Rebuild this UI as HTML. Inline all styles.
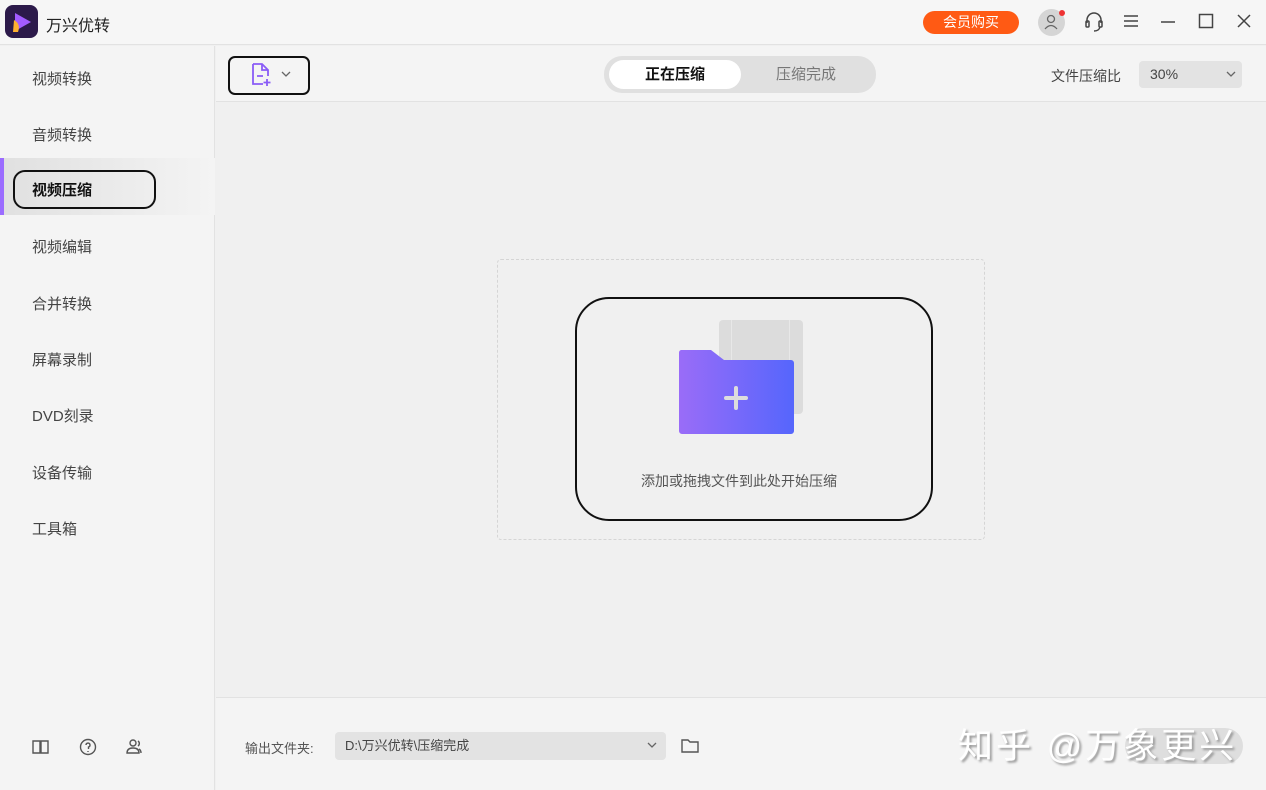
<!DOCTYPE html>
<html><head><meta charset="utf-8"><style>
*{margin:0;padding:0;box-sizing:border-box}
body{width:1266px;height:790px;overflow:hidden;background:#f0f0f0;font-family:"Liberation Sans","Noto Sans CJK SC",sans-serif;position:relative;color:#333}
.a{position:absolute}
.nav{position:absolute;left:32px;font-size:15px;color:#444}
</style></head><body>
<div class="a" style="left:0;top:0;width:1266px;height:45px;background:#f6f6f6;border-bottom:1px solid #e2e2e2"></div>
<div class="a" style="left:5px;top:5px;width:33px;height:33px;border-radius:8px;background:#2c1a4a"></div>
<svg class="a" style="left:9px;top:10px" width="26" height="24"><path d="M6 3 L22 12 L6 21 Z" fill="#a35cff"/><path d="M5 10 Q12 14 9 22 L4 22 Z" fill="#ffb030"/></svg>
<div class="a" style="left:46px;top:12px;font-size:16px;color:#222">万兴优转</div>
<div class="a" style="left:923px;top:11px;width:96px;height:23px;border-radius:12px;background:#ff5a14;color:#fff;font-size:14px;text-align:center;line-height:23px">会员购买</div>
<div class="a" style="left:1038px;top:9px;width:27px;height:27px;border-radius:50%;background:#d5d5d5"></div>
<svg class="a" style="left:1044px;top:14px" width="14" height="16" fill="none" stroke="#666" stroke-width="1.3"><circle cx="7" cy="5" r="3.5"/><path d="M1 15 Q7 8 13 15"/></svg>
<div class="a" style="left:1059px;top:10px;width:6px;height:6px;border-radius:50%;background:#e33"></div>
<svg class="a" style="left:1083px;top:10px" width="22" height="24" fill="none" stroke="#444" stroke-width="1.5"><path d="M4 13 V10 a7 7 0 0 1 14 0 V13"/><rect x="3" y="11" width="3" height="6" rx="1"/><rect x="16" y="11" width="3" height="6" rx="1"/><path d="M17 17 Q16 21 11 21"/></svg>
<svg class="a" style="left:1123px;top:14px" width="16" height="14" stroke="#444" stroke-width="1.5"><path d="M1 2h14M1 7h14M1 12h14"/></svg>
<svg class="a" style="left:1160px;top:14px" width="16" height="16" stroke="#444" stroke-width="1.5"><path d="M1 8h14"/></svg>
<svg class="a" style="left:1198px;top:13px" width="16" height="16" fill="none" stroke="#444" stroke-width="1.5"><rect x="1.5" y="1.5" width="13" height="13"/></svg>
<svg class="a" style="left:1236px;top:13px" width="16" height="16" stroke="#444" stroke-width="1.5"><path d="M2 2l12 12M14 2L2 14"/></svg>

<div class="a" style="left:0;top:46px;width:215px;height:744px;background:#f4f4f4;border-right:1px solid #e2e2e2"></div>
<div class="a" style="left:0;top:158px;width:215px;height:57px;background:linear-gradient(90deg,#e0e0e0,#f4f4f4)"></div>
<div class="a" style="left:0;top:158px;width:4px;height:57px;background:#9b6cff"></div>
<div class="a" style="left:13px;top:170px;width:143px;height:39px;border:2px solid #111;border-radius:12px"></div>
<div class="nav" style="top:68px">视频转换</div>
<div class="nav" style="top:124px">音频转换</div>
<div class="nav" style="top:179px;font-weight:bold;color:#111">视频压缩</div>
<div class="nav" style="top:236px">视频编辑</div>
<div class="nav" style="top:293px">合并转换</div>
<div class="nav" style="top:349px">屏幕录制</div>
<div class="nav" style="top:405px">DVD刻录</div>
<div class="nav" style="top:462px">设备传输</div>
<div class="nav" style="top:518px">工具箱</div>
<svg class="a" style="left:32px;top:739px" width="18" height="16" fill="none" stroke="#555" stroke-width="1.4"><path d="M1 2h7v12H1zM9 2h7v12H9z"/></svg>
<svg class="a" style="left:79px;top:738px" width="18" height="18" fill="none" stroke="#555" stroke-width="1.4"><circle cx="9" cy="9" r="7.5"/><path d="M7 7a2 2 0 1 1 2.5 2V11M9 13v1"/></svg>
<svg class="a" style="left:126px;top:738px" width="18" height="18" fill="none" stroke="#555" stroke-width="1.4"><circle cx="7" cy="5" r="3"/><path d="M1 15q0-5 6-5t6 5zM12 3a3 3 0 0 1 0 5M15 15q0-3-2-4"/></svg>

<div class="a" style="left:216px;top:46px;width:1050px;height:56px;background:#f4f4f4;border-bottom:1px solid #e2e2e2"></div>
<div class="a" style="left:228px;top:56px;width:82px;height:39px;border:2px solid #111;border-radius:7px"></div>
<svg class="a" style="left:250px;top:62px" width="24" height="26" fill="none" stroke="#8a5cf6" stroke-width="1.8"><path d="M3 2h9l6 6v6M3 2v20h10M12 2v6h6M7 14h6M17 17v7M13.5 20.5h7"/></svg>
<svg class="a" style="left:281px;top:71px" width="10" height="7" fill="none" stroke="#666" stroke-width="1.3"><path d="M1 1l4 4 4-4"/></svg>
<div class="a" style="left:604px;top:56px;width:272px;height:37px;border-radius:18px;background:#e0e0e0"></div>
<div class="a" style="left:609px;top:60px;width:132px;height:29px;border-radius:15px;background:#fff;text-align:center;line-height:29px;font-size:15px;font-weight:bold;color:#111">正在压缩</div>
<div class="a" style="left:741px;top:60px;width:130px;height:29px;text-align:center;line-height:29px;font-size:15px;color:#777">压缩完成</div>
<div class="a" style="left:1051px;top:66px;font-size:14px;color:#444">文件压缩比</div>
<div class="a" style="left:1139px;top:61px;width:103px;height:27px;border-radius:4px;background:#e3e3e3;font-size:14px;color:#444;line-height:27px;padding-left:11px">30%</div>
<svg class="a" style="left:1226px;top:71px" width="10" height="7" fill="none" stroke="#666" stroke-width="1.3"><path d="M1 1l4 4 4-4"/></svg>

<div class="a" style="left:497px;top:259px;width:488px;height:281px;border:1.5px dashed #d5d5d5;border-radius:4px"></div>
<div class="a" style="left:575px;top:297px;width:358px;height:224px;border:2px solid #111;border-radius:34px"></div>
<div class="a" style="left:719px;top:320px;width:84px;height:94px;background:#dcdcdc;border-radius:4px"></div>
<div class="a" style="left:731px;top:320px;width:1px;height:94px;background:#e8e8e8"></div>
<div class="a" style="left:789px;top:320px;width:1px;height:94px;background:#e8e8e8"></div>
<svg class="a" style="left:678px;top:350px" width="117" height="84"><defs><linearGradient id="g" x1="0" x2="1"><stop offset="0" stop-color="#9a6cf8"/><stop offset="1" stop-color="#5566fc"/></linearGradient></defs><path d="M3 0h30l13 10h67a3 3 0 0 1 3 3v68a3 3 0 0 1-3 3H4a3 3 0 0 1-3-3V3a3 3 0 0 1 2-3z" fill="url(#g)"/><path d="M58 38v20M48 48h20" stroke="#ddd" stroke-width="4" stroke-linecap="round"/></svg>
<div class="a" style="left:641px;top:471px;font-size:14px;color:#555">添加或拖拽文件到此处开始压缩</div>

<div class="a" style="left:216px;top:697px;width:1050px;height:93px;background:#f4f4f4;border-top:1px solid #e2e2e2"></div>
<div class="a" style="left:245px;top:738px;font-size:13px;color:#555">输出文件夹:</div>
<div class="a" style="left:335px;top:732px;width:331px;height:28px;border-radius:4px;background:#e3e3e3;font-size:13px;color:#444;line-height:28px;padding-left:10px">D:\万兴优转\压缩完成</div>
<svg class="a" style="left:647px;top:742px" width="10" height="7" fill="none" stroke="#666" stroke-width="1.3"><path d="M1 1l4 4 4-4"/></svg>
<svg class="a" style="left:681px;top:738px" width="18" height="16" fill="none" stroke="#555" stroke-width="1.4"><path d="M1 2h6l2 2h8v10H1z"/></svg>
<div class="a" style="left:1125px;top:728px;width:118px;height:36px;border-radius:18px;background:#dedede"></div>
<div class="a" style="left:958px;top:718px;font-size:35px;color:#fff;text-shadow:2px 2px 2px #999;letter-spacing:3px">知乎 @万象更兴</div>
</body></html>
